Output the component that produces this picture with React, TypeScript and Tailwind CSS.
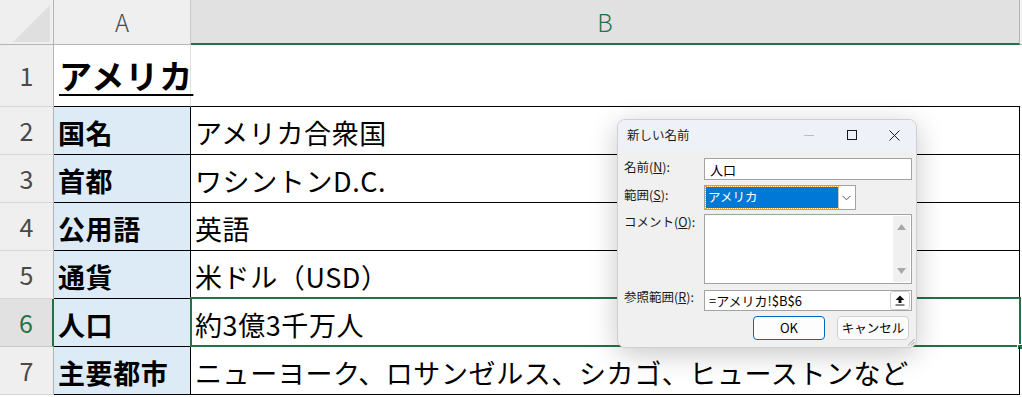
import React from "react";

const FONT = { fontFamily: '"Noto Sans CJK JP", "Noto Sans", sans-serif' };

type Row = { label: string; value: string };

const rows: Row[] = [
  { label: "国名", value: "アメリカ合衆国" },
  { label: "首都", value: "ワシントンD.C." },
  { label: "公用語", value: "英語" },
  { label: "通貨", value: "米ドル（USD）" },
  { label: "人口", value: "約3億3千万人" },
  { label: "主要都市", value: "ニューヨーク、ロサンゼルス、シカゴ、ヒューストンなど" },
];

const RowHead = ({ n, active }: { n: number; active?: boolean }) => (
  <div
    className={
      "w-[54px] shrink-0 flex items-center justify-center text-[25px] border-b " +
      (active
        ? "bg-[#e1e1e1] text-[#217346] border-r-2 border-r-[#217346] border-b-[#c6c6c6]"
        : "bg-[#efefef] text-[#4a4a4a] border-r border-r-[#b4b4b4] border-b-[#d6d6d6]")
    }
  >
    {n}
  </div>
);

const Label = ({ text, k, cls }: { text: string; k: string; cls: string }) => (
  <div className={"text-[12.5px] leading-none text-[#1a1a1a] whitespace-nowrap " + cls}>
    {text}(<span className="underline">{k}</span>):
  </div>
);

const Dialog = () => (
  <div
    className="absolute left-[617px] top-[119px] w-[300px] h-[229px] rounded-[8px] bg-[#f0f0f0] border border-[#cfcfcf] shadow-[0_6px_28px_rgba(0,0,0,0.22)] overflow-hidden"
    style={FONT}
  >
    {/* title bar */}
    <div className="h-[30px] bg-[#eef2f8] flex items-center pl-[9px]">
      <span className="text-[12.5px] text-[#1a1a1a] flex-1">新しい名前</span>
      <div className="flex items-center h-full">
        <div className="w-[46px] flex justify-center">
          <div className="w-[10px] h-px bg-[#bdbdbd]" />
        </div>
        <div className="w-[40px] flex justify-center">
          <div className="w-[10px] h-[10px] border border-[#1a1a1a]" />
        </div>
        <div className="w-[44px] flex justify-center">
          <svg width="11" height="11" viewBox="0 0 11 11">
            <path d="M0.5 0.5 L10.5 10.5 M10.5 0.5 L0.5 10.5" stroke="#1a1a1a" strokeWidth="1" />
          </svg>
        </div>
      </div>
    </div>

    {/* body */}
    <div className="grid grid-cols-[80px_208px] pl-[6px] pt-[8px] leading-none">
      <Label text="名前" k="N" cls="h-[22px] pt-[3px]" />
      <div className="h-[22px] bg-white border border-[#a3a3a3] flex items-center pl-[5px] text-[13px] text-black">
        人口
      </div>

      <Label text="範囲" k="S" cls="h-[25px] mt-[5px] pt-[4px]" />
      <div className="mt-[5px] w-[152px] h-[25px] bg-white border border-[#a3a3a3] flex p-[1px]">
        <div className="flex-1 bg-[#0078d7] outline outline-1 outline-dotted outline-[#f0a040] flex items-center pl-[2px] text-[12.5px] text-white">
          アメリカ
        </div>
        <div className="w-[16px] border-l border-[#c8c8c8] flex items-center justify-center">
          <svg width="9" height="6" viewBox="0 0 9 6">
            <path d="M0.5 0.8 L4.5 4.8 L8.5 0.8" stroke="#555" strokeWidth="1" fill="none" />
          </svg>
        </div>
      </div>

      <Label text="コメント" k="O" cls="h-[70px] mt-[4px] pt-[2px]" />
      <div className="mt-[4px] h-[70px] bg-white border border-[#a3a3a3] flex justify-end">
        <div className="w-[17px] my-[1px] mr-[1px] bg-[#f0f0f0] flex flex-col items-center justify-between py-[8px]">
          <svg width="9" height="6" viewBox="0 0 9 6">
            <path d="M4.5 0 L9 6 L0 6 Z" fill="#a8a8a8" />
          </svg>
          <svg width="9" height="6" viewBox="0 0 9 6">
            <path d="M0 0 L9 0 L4.5 6 Z" fill="#a8a8a8" />
          </svg>
        </div>
      </div>

      <Label text="参照範囲" k="R" cls="h-[21px] mt-[6px] pt-[1px]" />
      <div className="mt-[6px] h-[21px] bg-white border border-[#a3a3a3] flex items-center pl-[4px] text-[13px] text-black">
        <span className="flex-1">=アメリカ!$B$6</span>
        <div className="w-[20px] h-[19px] mr-px rounded-[3px] border border-[#cfcfcf] bg-white flex items-center justify-center">
          <svg width="10" height="11" viewBox="0 0 10 11">
            <path d="M5 0.5 L9.5 5 L6.5 5 L6.5 8 L3.5 8 L3.5 5 L0.5 5 Z" fill="#111" />
            <path d="M0.5 10 L9.5 10" stroke="#111" strokeWidth="1.2" />
          </svg>
        </div>
      </div>
    </div>

    <div className="flex justify-end gap-[12px] pr-[7px] mt-[5px]">
      <div className="w-[72px] h-[24px] rounded-[4px] border border-[#0067c0] bg-[#fdfdfd] flex items-center justify-center text-[13px] text-black">
        OK
      </div>
      <div className="w-[72px] h-[24px] rounded-[4px] border border-[#d0d0d0] bg-[#fbfbfb] flex items-center justify-center text-[12.5px] text-black">
        キャンセル
      </div>
    </div>

    <svg className="absolute right-[1px] bottom-[1px]" width="9" height="9" viewBox="0 0 9 9">
      <path d="M8.5 2 L2 8.5 M8.5 5 L5 8.5" stroke="#a0a0a0" strokeWidth="1" />
    </svg>
  </div>
);

export default function App() {
  return (
    <div className="relative w-[1022px] h-[397px] overflow-hidden bg-white" style={FONT}>
      {/* column headers */}
      <div className="flex h-[45px]">
        <div className="w-[54px] shrink-0 bg-[#efefef] border-r border-b border-[#b4b4b4] relative">
          <svg className="absolute left-0 top-0" width="53" height="44" viewBox="0 0 53 44">
            <path d="M50 5 L50 42 L13 42 Z" fill="#dfdfdf" />
          </svg>
        </div>
        <div className="w-[137px] shrink-0 bg-[#efefef] border-r border-r-[#c8c8c8] border-b border-b-[#b4b4b4] flex items-center justify-center text-[24px] font-light text-[#4a4a4a]">
          A
        </div>
        <div className="w-[829px] shrink-0 bg-[#e1e1e1] border-r border-r-[#b4b4b4] border-b-2 border-b-[#217346] flex items-center justify-center text-[24px] font-light text-[#217346]">
          B
        </div>
        <div className="flex-1 bg-[#f3f3f3] border-b border-[#b4b4b4]" />
      </div>

      {/* row 1 */}
      <div className="flex h-[62px]">
        <RowHead n={1} />
        <div className="w-[137px] shrink-0 border-r border-r-[#e2e2e2] border-b border-b-black flex items-center pl-[5px]">
          <span className="text-[33px] font-bold tracking-[1px] leading-none underline decoration-2 underline-offset-[5px] text-black whitespace-nowrap">
            アメリカ
          </span>
        </div>
        <div className="w-[829px] shrink-0 border-b border-black" />
        <div className="flex-1 border-b border-[#e2e2e2]" />
      </div>

      {/* table rows */}
      {rows.map((r, i) => {
        const n = i + 2;
        const active = n === 6;
        return (
          <div key={n} className="flex h-[48px]">
            <RowHead n={n} active={active} />
            <div className="w-[137px] shrink-0 bg-[#ddebf7] border-r border-b border-black flex items-center pl-[4px] pt-[3px]">
              <span className="text-[27px] font-bold tracking-[0.6px] text-black whitespace-nowrap leading-none">
                {r.label}
              </span>
            </div>
            <div className="relative w-[829px] shrink-0 border-r border-b border-black flex items-center pl-[4px] pt-[3px]">
              <span className="text-[27px] tracking-[0.6px] text-black whitespace-nowrap leading-none">
                {r.value}
              </span>
              {active && (
                <>
                  <div className="absolute -top-[2px] -left-[1px] -right-[2px] -bottom-px border-2 border-[#217346]" />
                  <div className="absolute -right-[4px] -bottom-[4px] w-[6px] h-[6px] bg-[#217346] border border-white" />
                </>
              )}
            </div>
            <div className="flex-1 border-b border-[#e2e2e2]" />
          </div>
        );
      })}

      <Dialog />
    </div>
  );
}
